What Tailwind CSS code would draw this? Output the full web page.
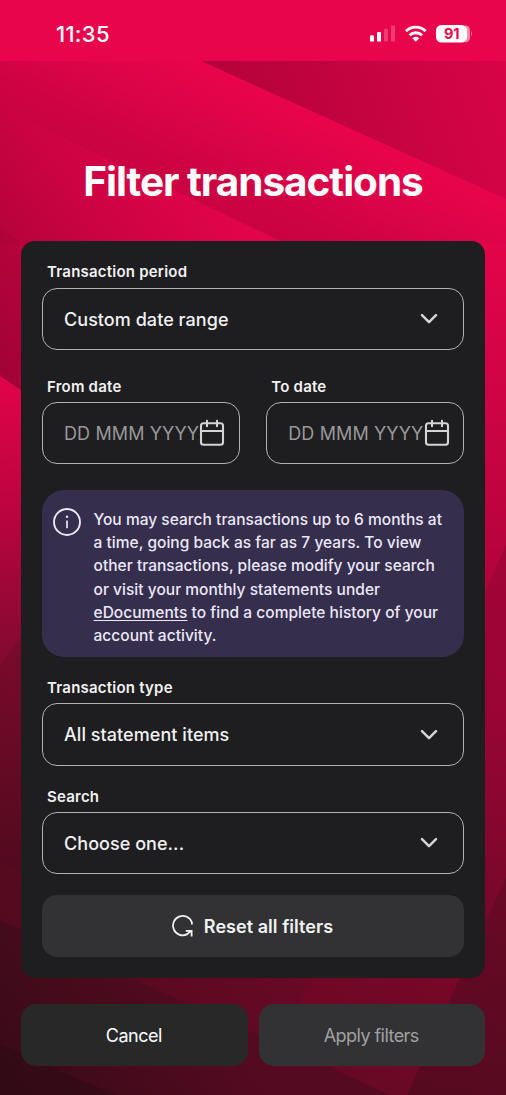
<!DOCTYPE html>
<html lang="en">
<head>
<meta charset="utf-8">
<title>Filter transactions</title>
<script src="https://cdn.jsdelivr.net/npm/@tailwindcss/browser@4"></script>
</head>
<body class="w-[506px] h-[1095px] overflow-hidden bg-[#e9054b] font-[Inter,sans-serif] text-white">
<div class="relative isolate flex h-[1095px] w-[506px] flex-col">
  <!-- Faceted backdrop -->
  <svg class="absolute inset-0 -z-10" width="506" height="1095" viewBox="0 0 506 1095">
    <defs>
      <linearGradient id="a" gradientUnits="userSpaceOnUse" x1="201" y1="61" x2="142" y2="191"><stop offset="0" stop-color="#e9044b"/><stop offset=".35" stop-color="#dc0448"/><stop offset=".7" stop-color="#ce0343"/><stop offset="1" stop-color="#c60341"/></linearGradient>
      <linearGradient id="b" gradientUnits="userSpaceOnUse" x1="240" y1="110" x2="506" y2="20"><stop offset="0" stop-color="#b6033c"/><stop offset="1" stop-color="#d90447"/></linearGradient>
      <linearGradient id="c" gradientUnits="userSpaceOnUse" x1="250" y1="200" x2="0" y2="380"><stop offset="0" stop-color="#e6044b"/><stop offset=".47" stop-color="#ca0343"/><stop offset=".71" stop-color="#b6033c"/><stop offset="1" stop-color="#a00336"/></linearGradient>
      <linearGradient id="d" gradientUnits="userSpaceOnUse" x1="0" y1="380" x2="30" y2="655"><stop offset="0" stop-color="#e0044a"/><stop offset=".45" stop-color="#be0440"/><stop offset="1" stop-color="#820a30"/></linearGradient>
      <linearGradient id="e" gradientUnits="userSpaceOnUse" x1="500" y1="200" x2="490" y2="600"><stop offset="0" stop-color="#e9044b"/><stop offset=".5" stop-color="#ce0444"/><stop offset="1" stop-color="#b0033b"/></linearGradient>
      <linearGradient id="f" gradientUnits="userSpaceOnUse" x1="40" y1="640" x2="0" y2="865"><stop offset="0" stop-color="#7c0a2d"/><stop offset="1" stop-color="#520a1f"/></linearGradient>
      <linearGradient id="g" gradientUnits="userSpaceOnUse" x1="450" y1="940" x2="130" y2="1160"><stop offset="0" stop-color="#760829"/><stop offset="1" stop-color="#500a1e"/></linearGradient>
      <linearGradient id="h" gradientUnits="userSpaceOnUse" x1="190" y1="990" x2="30" y2="1110"><stop offset="0" stop-color="#540a20"/><stop offset="1" stop-color="#380b17"/></linearGradient>
      <linearGradient id="i" gradientUnits="userSpaceOnUse" x1="506" y1="560" x2="480" y2="920"><stop offset="0" stop-color="#a20437"/><stop offset=".4" stop-color="#9a0535"/><stop offset="1" stop-color="#760829"/></linearGradient>
      <linearGradient id="j" gradientUnits="userSpaceOnUse" x1="500" y1="890" x2="460" y2="1095"><stop offset="0" stop-color="#690926"/><stop offset="1" stop-color="#560a20"/></linearGradient>
    </defs>
    <rect width="506" height="1095" fill="url(#e)"/>
    <path d="M0 61H201L506 199V244H0Z" fill="url(#a)"/>
    <path d="M0 108L180 193L280 241V400H0Z" fill="url(#c)"/>
    <path d="M0 229L24 244H0Z" fill="#a80338" opacity=".5"/>
    <path d="M201 61H506V199Z" fill="url(#b)"/>
    <path d="M0 376L40 403V700H0Z" fill="url(#d)"/>
    <path d="M0 665L40 613V900H0Z" fill="url(#f)"/>
    <path d="M506 545L485 591L480 960L506 900Z" fill="url(#i)"/>
    <path d="M0 862L60 890L400 960H506V1095H0Z" fill="url(#g)"/>
    <path d="M0 920L120 973L290 1049L390 1095H0Z" fill="url(#h)"/>
    <path d="M0 1044L115 1095H0Z" fill="#2b0a13" opacity=".5"/>
    <path d="M311 975L298 1006H460V975Z" fill="#7d0629" opacity=".3"/>
    <path d="M506 877L460 977L407 1095H506Z" fill="url(#j)"/>
  </svg>

  <header class="flex h-[61px] shrink-0 items-start justify-between bg-[#e9054b] pr-[33px] pl-[56px] pt-[20px]">
    <time class="text-[22px] leading-[28px] font-[550] tracking-[0.3px]">11:35</time>
    <svg class="mt-[4px]" width="103" height="20" viewBox="370 24 103 20" fill="#fff">
      <rect x="370" y="35.2" width="4" height="6.4" rx="1.2"/><rect x="377" y="32" width="4" height="9.6" rx="1.2"/>
      <rect x="384" y="28.8" width="4" height="12.8" rx="1.2" opacity=".22"/><rect x="391" y="25.5" width="4" height="16.1" rx="1.2" opacity=".22"/>
      <g fill="none" stroke="#fff" stroke-width="2.8"><path d="M406 31.2a14 14 0 0 1 19.6 0"/><path d="M409.6 35.3a8.8 8.8 0 0 1 12.4 0"/></g>
      <path d="M412.4 38.3a5.2 5.2 0 0 1 6.8 0l-3.4 3.4z"/>
      <path d="M465 25.2q5 .6 5 5v7.2q0 4.4-5 5z" opacity=".5"/><path d="M471 31q2 2.6 0 5.2z" opacity=".5"/>
      <rect x="436" y="25" width="31.2" height="17.5" rx="5.5"/>
      <text x="451.8" y="39" text-anchor="middle" font-family="Inter" font-size="14.5" font-weight="700" fill="#e9054b">91</text>
    </svg>
  </header>

  <h1 class="mt-[96px] h-[50px] text-center text-[40.5px] leading-[50px] font-bold"><span class="inline-block tracking-[-1.03px]">Filter transactions</span></h1>

  <main class="mx-[21px] mt-[34px] flex h-[737px] flex-col rounded-[14px] bg-[#1e1e20] pr-[21px] pl-[20.5px] text-[#f1f1f2]">
    <label class="mt-[21px] ml-[5.5px] text-[15px] leading-5 font-semibold tracking-[0.22px]">Transaction period</label>
    <div class="mt-[6px] flex h-[62px] shrink-0 items-center justify-between rounded-[15px] border-[1.5px] border-[#b2b2b4] pr-[25px] pl-[21.5px] text-[18px] font-[450] tracking-[0.05px]">Custom date range
      <svg width="18" height="12" viewBox="0 0 18 12" fill="none" stroke="#d4d4d6" stroke-width="2.5" stroke-linecap="round" stroke-linejoin="round"><path d="M2 2.2l7 7 7-7"/></svg></div>

    <div class="mt-[27px] grid grid-cols-2 gap-[26px]">
      <div>
        <div class="ml-[5.5px] text-[15px] leading-5 font-semibold tracking-[0.22px]">From date</div>
        <div class="mt-[5px] flex h-[62px] items-center justify-between rounded-[15px] border-[1.5px] border-[#b2b2b4] pr-[13.5px] pl-[21.5px] text-[18px] tracking-[0.12px] whitespace-nowrap text-[#98989a]"><span>DD MMM YYYY</span>
          <svg class="shrink-0" width="26" height="28" viewBox="0 0 26 28" fill="none" stroke="#d4d4d6" stroke-width="2.1" stroke-linecap="round"><rect x="2" y="4.2" width="22" height="21.5" rx="2.5"/><path d="M2 12h22M8 1.8v5.4M18 1.8v5.4"/></svg></div>
      </div>
      <div>
        <div class="ml-[5.5px] text-[15px] leading-5 font-semibold tracking-[0.22px]">To date</div>
        <div class="mt-[5px] flex h-[62px] items-center justify-between rounded-[15px] border-[1.5px] border-[#b2b2b4] pr-[13.5px] pl-[21.5px] text-[18px] tracking-[0.12px] whitespace-nowrap text-[#98989a]"><span>DD MMM YYYY</span>
          <svg class="shrink-0" width="26" height="28" viewBox="0 0 26 28" fill="none" stroke="#d4d4d6" stroke-width="2.1" stroke-linecap="round"><rect x="2" y="4.2" width="22" height="21.5" rx="2.5"/><path d="M2 12h22M8 1.8v5.4M18 1.8v5.4"/></svg></div>
      </div>
    </div>

    <section class="mt-[26px] flex h-[167px] shrink-0 rounded-[22px] bg-[#362e4d] pt-[17px] pl-[11px] text-[#ece8f8]">
      <svg class="shrink-0 -ml-[0.5px] -mt-[0.5px]" width="30" height="30" viewBox="0 0 30 30" fill="none" stroke="#ece8f8" stroke-width="1.9"><circle cx="15" cy="15" r="13"/><path d="M15 13.6v7.6" stroke-width="1.7"/><circle cx="15" cy="9.8" r="1.2" fill="#ece8f8" stroke="none"/></svg>
      <p class="ml-[11.5px] mt-[0.5px] text-[15.5px] leading-[23.35px] font-[450] tracking-[0.03px] whitespace-nowrap">You may search transactions up to 6 months at<br>a time, going back as far as 7 years. To view<br>other transactions, please modify your search<br>or visit your monthly statements under<br><a class="underline underline-offset-2">eDocuments</a> to find a complete history of your<br>account activity.</p>
    </section>

    <label class="mt-[21px] ml-[5.5px] text-[15px] leading-5 font-semibold tracking-[0.22px]">Transaction type</label>
    <div class="mt-[5px] flex h-[63px] shrink-0 items-center justify-between rounded-[15px] border-[1.5px] border-[#b2b2b4] pr-[25px] pl-[21.5px] text-[18px] font-[450] tracking-[0.05px]">All statement items
      <svg width="18" height="12" viewBox="0 0 18 12" fill="none" stroke="#d4d4d6" stroke-width="2.5" stroke-linecap="round" stroke-linejoin="round"><path d="M2 2.2l7 7 7-7"/></svg></div>

    <label class="mt-[21px] ml-[5.5px] text-[15px] leading-5 font-semibold tracking-[0.22px]">Search</label>
    <div class="mt-[5px] flex h-[62px] shrink-0 items-center justify-between rounded-[15px] border-[1.5px] border-[#b2b2b4] pr-[25px] pl-[21.5px] text-[18px] font-[450] tracking-[0.05px]">Choose one...
      <svg width="18" height="12" viewBox="0 0 18 12" fill="none" stroke="#d4d4d6" stroke-width="2.5" stroke-linecap="round" stroke-linejoin="round"><path d="M2 2.2l7 7 7-7"/></svg></div>

    <button class="mt-[21px] flex h-[62px] shrink-0 items-center justify-center gap-[9.5px] rounded-[15px] bg-[#323234] pr-[2px] text-[18px] font-semibold tracking-[0.05px] text-[#f1f1f2]">
      <svg width="24" height="24" viewBox="0 0 24 24" fill="none" stroke="#f1f1f2" stroke-width="1.8"><path d="M21.9 10.6V8.6A9.7 9.7 0 1 0 17.3 20.1L21 16.8M15.8 16.8H21.6V22.4"/></svg>
      <span>Reset all filters</span></button>
  </main>

  <footer class="mx-[21px] mt-[26px] grid h-[62px] grid-cols-2 gap-[11px] text-[18px]">
    <button class="rounded-[15px] bg-[#282829] pr-px tracking-[-0.5px]">Cancel</button>
    <button class="rounded-[15px] bg-[#323234] pr-px tracking-[-0.55px] text-[#a0a0a2]">Apply filters</button>
  </footer>
</div>
</body>
</html>
